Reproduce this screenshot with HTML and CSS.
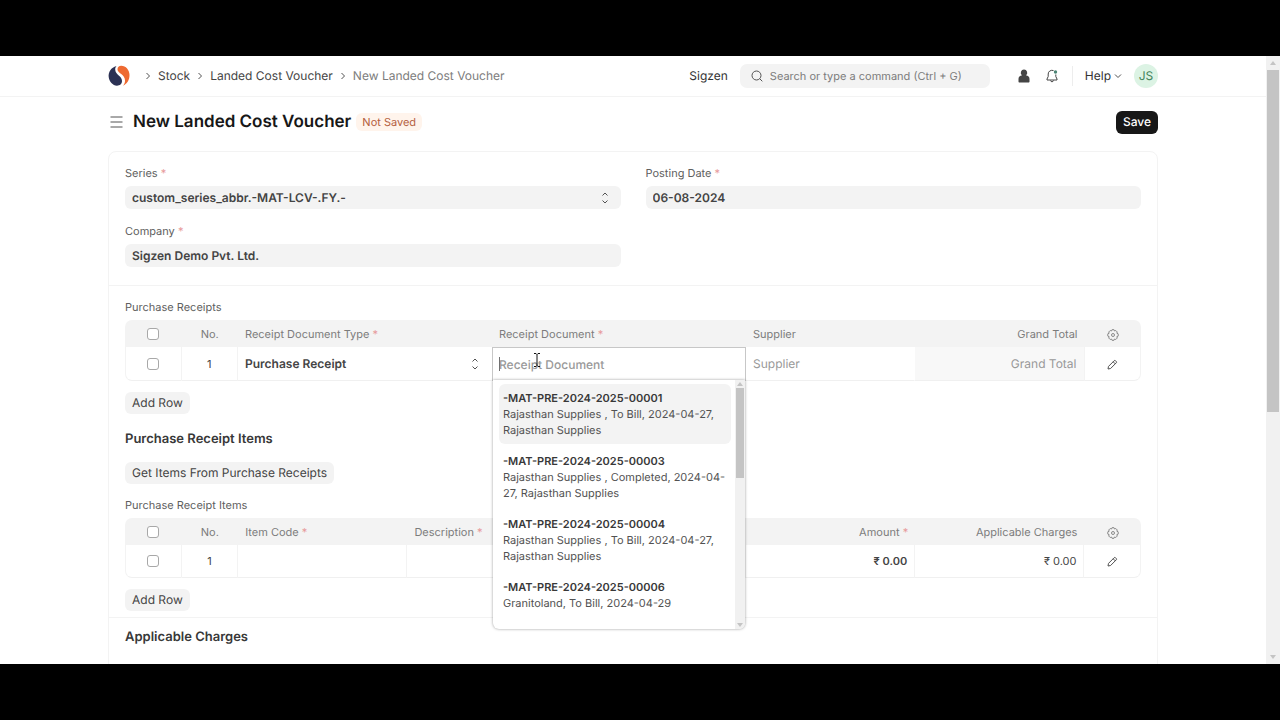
FILE: index.html
```
<!DOCTYPE html>
<html lang="en">
<head>
  <meta charset="UTF-8" />
  <meta name="viewport" content="width=device-width, initial-scale=1.0" />
  <title>New Landed Cost Voucher</title>
  <link rel="stylesheet" href="styles.css">
</head>
<body>
  <!-- shared icons -->
  <svg class="sprite" aria-hidden="true">
    <symbol id="chevron" viewBox="0 0 8 8"><path d="M2.500 1l3 3-3 3"/></symbol>
    <symbol id="updown" viewBox="0 0 8 12"><path d="M1.500 3.500L4 1l2.500 2.500M1.500 8.500L4 11l2.500-2.500"/></symbol>
    <symbol id="gear" viewBox="0 0 12 12"><path d="M5 .7h2l.5 1.300 1.300-.5 1.500 1.500-.5 1.200 1.400.6v2.300l-1.400.6.5 1.300-1.500 1.500-1.300-.5-.5 1.300H5L4.500 10l-1.300.5L1.700 9l.5-1.300L.8 7.100V4.800l1.400-.6L1.700 3l1.500-1.500 1.300.5z"/><circle cx="6" cy="6" r="1.500"/></symbol>
    <symbol id="pencil" viewBox="0 0 12 12"><path d="M2 10l.5-2.600 5.600-5.600a1 1 0 0 1 1.500 0l.6.600a1 1 0 0 1 0 1.500L4.600 9.500zM7.200 2.800l2 2"/></symbol>
  </svg>

  <div class="window">
    <div class="page">
      <header class="navbar">
        <div class="container navbar-row">
          <nav class="breadcrumbs">
            <a href="#" class="logo" aria-label="Home">
              <svg width="22" height="22" viewBox="0 0 22 22">
                <path fill="#2b3154" d="M8.500 1C3 2.500.2 7 .7 12c.5 4.700 4 8.500 8.300 8.700 2.900 0 5-1.900 5-4.700 0-2.300-1.400-3.700-3-5.200C8.700 8.700 7.200 7 7.200 4.200c0-1.300.5-2.400 1.300-3.200z"/>
                <path fill="#ee6a31" d="M9.500 4.200C9.500 2 11 .7 13.200.7c4.700 0 8.300 4.300 8.300 9.300 0 5.200-2.700 9-6.500 10.700 1.500-1.500 2-3.200 2-5.200 0-3-1.800-4.800-3.800-6.500C11.200 7.400 9.500 6.400 9.500 4.200z"/>
              </svg>
            </a>
            <svg class="sep"><use href="#chevron"/></svg>
            <a href="#">Stock</a>
            <svg class="sep"><use href="#chevron"/></svg>
            <a href="#">Landed Cost Voucher</a>
            <svg class="sep"><use href="#chevron"/></svg>
            <span class="current">New Landed Cost Voucher</span>
          </nav>
          <div class="navbar-right">
            <span class="brand">Sigzen</span>
            <div class="search">
              <svg width="12" height="12" viewBox="0 0 12 12"><circle cx="5.500" cy="5.500" r="4.500"/><path d="M8.800 8.800l2.500 2.500"/></svg>
              <input type="text" aria-label="Search" placeholder="Search or type a command (Ctrl + G)">
            </div>
            <button class="icon-btn" aria-label="User">
              <svg width="12" height="14" viewBox="0 0 12 14"><path fill="#444" d="M6 .5a3.200 3.200 0 0 1 1.900 5.800C10.300 6.600 11.500 8 11.500 10v2.500c0 .6-.4 1-1 1h-9c-.6 0-1-.4-1-1V10c0-2 1.200-3.400 3.600-3.700A3.200 3.200 0 0 1 6 .5z"/></svg>
            </button>
            <button class="icon-btn" aria-label="Notifications">
              <svg width="12" height="14" viewBox="0 0 12 14"><path fill="none" stroke="#444" d="M7.500 1.500C4.500.7 2.200 2.500 2.200 5v2.500L1 10v1h10v-1L9.800 7.500V5.500M4.500 11.500c.3 1.700 2.700 1.700 3 0"/><circle cx="9.500" cy="3" r="1.700" fill="#4c8575"/></svg>
            </button>
            <span class="divider"></span>
            <button class="help">Help <svg width="8" height="8" viewBox="0 0 8 8"><path d="M1 2.500l3 3 3-3"/></svg></button>
            <span class="avatar">JS</span>
          </div>
        </div>
      </header>

      <div class="container page-head">
        <button class="menu-btn" aria-label="Toggle sidebar">
          <svg width="13" height="12" viewBox="0 0 13 12"><path d="M.5 1h12M.5 6h12M.5 11h12"/></svg>
        </button>
        <h1>New Landed Cost Voucher</h1>
        <span class="indicator">Not Saved</span>
        <button class="btn-primary">Save</button>
      </div>

      <main class="container">
        <div class="form">
          <section class="section details">
            <div class="column">
              <div class="field">
                <label for="series" class="reqd">Series</label>
                <div class="select-wrap">
                  <select id="series"><option>custom_series_abbr.-MAT-LCV-.FY.-</option></select>
                  <svg><use href="#updown"/></svg>
                </div>
              </div>
              <div class="field">
                <label for="company" class="reqd">Company</label>
                <input id="company" type="text" value="Sigzen Demo Pvt. Ltd.">
              </div>
            </div>
            <div class="column">
              <div class="field">
                <label for="date" class="reqd">Posting Date</label>
                <input id="date" type="text" value="06-08-2024">
              </div>
            </div>
          </section>

          <section class="section receipts">
            <div class="grid-label" id="receipts-label">Purchase Receipts</div>
            <table class="grid" aria-labelledby="receipts-label">
              <colgroup><col><col><col class="w-wide"><col class="w-wide"><col class="w-mid"><col class="w-mid"><col></colgroup>
              <thead>
                <tr>
                  <th class="center"><input type="checkbox" aria-label="Select all"></th>
                  <th class="center">No.</th>
                  <th><span class="reqd">Receipt Document Type</span></th>
                  <th><span class="reqd">Receipt Document</span></th>
                  <th>Supplier</th>
                  <th class="right">Grand Total</th>
                  <th class="center"><svg class="gear"><use href="#gear"/></svg></th>
                </tr>
              </thead>
              <tbody>
                <tr>
                  <td class="center"><input type="checkbox" aria-label="Select row 1"></td>
                  <td class="center">1</td>
                  <td class="no-line">
                    <div class="select-wrap">
                      <select aria-label="Receipt Document Type"><option>Purchase Receipt</option></select>
                      <svg><use href="#updown"/></svg>
                    </div>
                  </td>
                  <td class="editing">
                    <input type="text" aria-label="Receipt Document" placeholder="Receipt Document">
                    <span class="caret"></span>
                    <div class="dropdown">
                      <ul>
                        <li class="active"><strong>-MAT-PRE-2024-2025-00001</strong>Rajasthan Supplies , To Bill, 2024-04-27, Rajasthan Supplies</li>
                        <li><strong>-MAT-PRE-2024-2025-00003</strong>Rajasthan Supplies , Completed, 2024-04-27, Rajasthan Supplies</li>
                        <li><strong>-MAT-PRE-2024-2025-00004</strong>Rajasthan Supplies , To Bill, 2024-04-27, Rajasthan Supplies</li>
                        <li><strong>-MAT-PRE-2024-2025-00006</strong>Granitoland, To Bill, 2024-04-29</li>
                      </ul>
                      <div class="scrollbar small"><i class="up"></i><div class="thumb"></div><i class="down"></i></div>
                    </div>
                    <svg class="pointer" width="8" height="16" viewBox="0 0 8 16"><path d="M1 1.500h2l1 1 1-1h2M4 2.500v11M1 14.500h2l1-1 1 1h2"/></svg>
                  </td>
                  <td class="no-line"><input type="text" aria-label="Supplier" placeholder="Supplier"></td>
                  <td class="readonly"><input type="text" class="right" aria-label="Grand Total" placeholder="Grand Total" readonly></td>
                  <td class="center"><svg class="pencil"><use href="#pencil"/></svg></td>
                </tr>
              </tbody>
            </table>
            <button class="btn">Add Row</button>
          </section>

          <section class="section items">
            <h2>Purchase Receipt Items</h2>
            <button class="btn">Get Items From Purchase Receipts</button>
            <div class="grid-label" id="items-label">Purchase Receipt Items</div>
            <table class="grid" aria-labelledby="items-label">
              <colgroup><col><col><col class="w-mid"><col class="w-mid"><col class="w-mid"><col class="w-mid"><col class="w-mid"><col></colgroup>
              <thead>
                <tr>
                  <th class="center"><input type="checkbox" aria-label="Select all"></th>
                  <th class="center">No.</th>
                  <th><span class="reqd">Item Code</span></th>
                  <th><span class="reqd">Description</span></th>
                  <th></th>
                  <th class="right"><span class="reqd">Amount</span></th>
                  <th class="right">Applicable Charges</th>
                  <th class="center"><svg class="gear"><use href="#gear"/></svg></th>
                </tr>
              </thead>
              <tbody>
                <tr>
                  <td class="center"><input type="checkbox" aria-label="Select row 1"></td>
                  <td class="center">1</td>
                  <td></td>
                  <td></td>
                  <td></td>
                  <td class="right bold">₹ 0.00</td>
                  <td class="right">₹ 0.00</td>
                  <td class="center"><svg class="pencil"><use href="#pencil"/></svg></td>
                </tr>
              </tbody>
            </table>
            <button class="btn">Add Row</button>
          </section>

          <section class="section charges">
            <h2>Applicable Charges</h2>
          </section>
        </div>
      </main>
    </div>
    <div class="scrollbar"><i class="up"></i><div class="thumb"></div><i class="down"></i></div>
  </div>
</body>
</html>
```
FILE: styles.css
```
* {
  box-sizing: border-box;
}
body {
  margin: 0;
  height: 100vh;
  padding: 56px 0;
  background: #000;
  color: #444;
  font-family: Inter, "Liberation Sans", sans-serif;
  font-size: 12px;
  line-height: 16px;
  text-rendering: geometricPrecision;
}
a {
  color: inherit;
  text-decoration: none;
}
button, input, select {
  font: inherit;
  color: inherit;
  text-rendering: inherit;
}
button {
  border: 0;
  background: none;
  padding: 0;
}
svg {
  display: block;
  fill: none;
  stroke: #525252;
}
.sprite {
  position: absolute;
  width: 0;
  height: 0;
}
.window {
  display: flex;
  height: 100%;
  overflow: hidden;
  background: #fff;
}
.page {
  flex: 1;
  min-width: 0;
}
.container {
  max-width: 1050px;
  margin: 0 auto;
}

/* navbar */
.navbar {
  border-bottom: 1px solid #f3f3f3;
}
.navbar-row {
  display: flex;
  justify-content: space-between;
  align-items: center;
  height: 40px;
}
.breadcrumbs, .navbar-right {
  display: flex;
  align-items: center;
}
.breadcrumbs {
  gap: 6px;
}
.logo {
  margin-right: 8px;
}
.logo svg {
  stroke: none;
}
.sep {
  width: 8px;
  height: 8px;
}
.current {
  color: #7c7c7c;
}
.navbar-right {
  gap: 12px;
}
.brand, .help {
  color: #333;
}
.search {
  display: flex;
  align-items: center;
  gap: 7px;
  width: 250px;
  height: 24px;
  padding: 0 11px;
  border-radius: 7px;
  background: #f3f3f3;
  color: #7c7c7c;
}
.search input {
  flex: 1;
  min-width: 0;
  padding: 0;
  border: 0;
  background: none;
  font-size: 11px;
}
.icon-btn {
  width: 16px;
}
.icon-btn svg {
  margin: 0 auto;
  stroke: none;
}
.search + .icon-btn {
  margin-left: 14px;
}
.divider {
  height: 20px;
  border-left: 1px solid #ededed;
}
.help {
  display: flex;
  align-items: center;
  gap: 3px;
}
.avatar {
  width: 24px;
  border-radius: 50%;
  background: #dcf3e4;
  color: #44855c;
  line-height: 24px;
  text-align: center;
}

/* title bar */
.page-head {
  display: flex;
  align-items: center;
  height: 50px;
  padding-left: 2px;
}
.menu-btn {
  margin-right: 10px;
}
h1 {
  margin: 0 5px 0 0;
  color: #171717;
  font-size: 17px;
  font-weight: 600;
  line-height: 24px;
}
.indicator {
  padding: 1px 6px;
  border-radius: 6px;
  background: #fff4ec;
  color: #b5603f;
  font-size: 11px;
}
.btn-primary {
  height: 23px;
  margin-left: auto;
  padding: 0 7px;
  border-radius: 6px;
  background: #171717;
  color: #fff;
  font-weight: 500;
}

/* form */
.form {
  margin-top: 4px;
  border: 1px solid #f3f3f3;
  border-radius: 8px;
}
.section {
  padding: 0 16px;
}
.details {
  display: flex;
  gap: 25px;
  padding-top: 13px;
  padding-bottom: 18px;
  border-bottom: 1px solid #f3f3f3;
}
.column {
  flex: 1;
}
.field + .field {
  margin-top: 14px;
}
.field label, .grid-label {
  display: block;
  color: #606060;
  font-size: 11px;
}
.field label {
  margin-bottom: 5px;
}
.reqd::after {
  content: " *";
  color: #e79a9a;
}
.field input, .field select {
  display: block;
  width: 100%;
  height: 23px;
  padding: 0 7px;
  border: 0;
  border-radius: 6px;
  background: #f3f3f3;
  font-weight: 600;
}
.select-wrap {
  position: relative;
}
.select-wrap select {
  appearance: none;
}
.select-wrap svg {
  position: absolute;
  top: 50%;
  right: 12px;
  width: 8px;
  height: 12px;
  margin-top: -6px;
  pointer-events: none;
}
.grid .select-wrap svg {
  right: 5px;
}

/* child tables */
.receipts {
  padding-top: 13px;
}
.grid-label {
  margin-bottom: 5px;
}
.grid {
  width: 100%;
  table-layout: fixed;
  border-spacing: 0;
}
.w-wide {
  width: 25%;
}
.w-mid {
  width: 16.66%;
}
.grid th {
  height: 27px;
  padding: 0 7px;
  background: #f3f3f3;
  color: #7c7c7c;
  font-size: 11px;
  font-weight: 400;
  text-align: left;
}
.grid th:first-child {
  border-top-left-radius: 7px;
}
.grid th:last-child {
  border-top-right-radius: 7px;
}
.grid td {
  height: 33px;
  padding: 0 7px;
  border-right: 1px solid #f3f3f3;
  border-bottom: 1px solid #f0f0f0;
  font-size: 11px;
}
.grid td:first-child {
  border-left: 1px solid #f3f3f3;
  border-bottom-left-radius: 7px;
}
.grid td:last-child {
  border-bottom-right-radius: 7px;
}
.grid .center {
  text-align: center;
}
.grid .right {
  text-align: right;
}
.grid .bold {
  font-weight: 600;
}
.grid .no-line {
  border-right-color: transparent;
}
.grid td select, .grid td input[type="text"] {
  display: block;
  width: 100%;
  height: 32px;
  padding: 0;
  border: 0;
  background: none;
  outline: 0;
  font-size: 12px;
}
.grid td select {
  font-weight: 600;
}
.search input::placeholder {
  color: #7c7c7c;
  opacity: 1;
}
.grid input::placeholder {
  color: #999;
  opacity: 1;
}
.grid .editing input::placeholder {
  font-weight: 500;
}
.grid .readonly {
  background: #f8f8f8;
}
.grid input[type="checkbox"] {
  appearance: none;
  display: block;
  width: 12px;
  height: 12px;
  margin: 0 auto;
  border: 1px solid #a8a8a8;
  border-radius: 3px;
  background: #fff;
}
.gear, .pencil {
  width: 12px;
  height: 12px;
  margin: 2px auto 0;
}
.gear {
  stroke: #8a8a8a;
}
.grid .editing {
  position: relative;
  padding: 0 6px;
  border: 1px solid #c7c7c7;
}
.caret {
  position: absolute;
  top: 9px;
  left: 6px;
  height: 14px;
  border-left: 1px solid #707070;
}
.pointer {
  position: absolute;
  top: 4px;
  left: 40px;
  stroke: #111;
}

/* link field suggestions */
.dropdown {
  position: absolute;
  z-index: 2;
  top: 100%;
  left: 0;
  right: 0;
  display: flex;
  height: 249px;
  border-radius: 0 0 6px 6px;
  overflow: hidden;
  background: #fff;
  box-shadow: 0 0 3px rgba(0, 0, 0, .4);
}
.dropdown ul {
  flex: 1;
  min-width: 0;
  margin: 0;
  padding: 4px 4px 0 6px;
  list-style: none;
}
.dropdown li {
  margin-bottom: 3px;
  padding: 6px 4px;
  border-radius: 6px;
  color: #525252;
}
.dropdown .active {
  background: #f3f3f3;
}
.dropdown strong {
  display: block;
  color: #383838;
  font-weight: 600;
}

/* buttons and headings */
.btn {
  display: block;
  height: 22px;
  margin-top: 11px;
  padding: 0 7px;
  border-radius: 6px;
  background: #f3f3f3;
}
h2 {
  margin: 0;
  color: #383838;
  font-size: 13px;
  font-weight: 600;
  line-height: 20px;
}
.items {
  padding-top: 15px;
  padding-bottom: 6px;
  border-bottom: 1px solid #f3f3f3;
}
.items h2 + .btn {
  margin-top: 13px;
  margin-bottom: 13px;
}
.charges {
  padding-top: 9px;
  padding-bottom: 60px;
}

/* scrollbars */
.scrollbar {
  display: flex;
  flex-direction: column;
  align-items: center;
  width: 14px;
  padding: 5px 0;
  background: #f1f1f1;
}
.scrollbar .thumb {
  width: 12px;
  height: 342px;
  margin: 5px 0 auto;
  background: #c4c4c4;
}
.scrollbar i {
  border: 3px solid transparent;
}
.scrollbar .up {
  border-top: 0;
  border-bottom: 4px solid #c4c4c4;
}
.scrollbar .down {
  border-bottom: 0;
  border-top: 4px solid #c4c4c4;
}
.small {
  width: 10px;
  padding: 2px 0;
}
.small .thumb {
  width: 8px;
  height: 90px;
  margin-top: 2px;
}
```
